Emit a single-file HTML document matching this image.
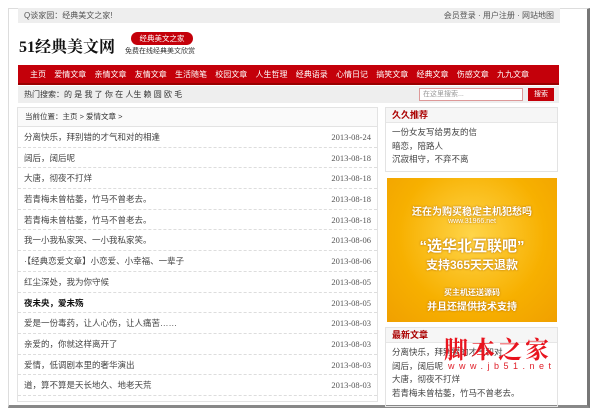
<!DOCTYPE html><html><head><meta charset="utf-8"><style>
*{margin:0;padding:0;box-sizing:border-box}
body{width:600px;height:413px;background:#fff;font-family:"Liberation Sans","Noto Sans CJK SC",sans-serif;font-size:9px;color:#333;position:relative;overflow:hidden}
.frame{position:absolute;left:8px;top:8px;width:582px;height:400px;border:1px solid #ddd;border-right:3px solid #777;border-bottom:3px solid #888;background:#fff}
.a{position:absolute}
.top{left:18px;top:8px;width:542px;height:15px;background:#eee;color:#555;font-size:8px;line-height:15px;padding:0 6px}
.nav{left:18px;top:65px;width:541px;height:20px;background:#c4000a;border-bottom:2px solid #900;color:#fff;font-size:8px;line-height:20px;display:flex;justify-content:space-between;padding:0 30px 0 12px}
.srch{left:18px;top:86px;width:541px;height:17px;background:#eee;font-size:8px;line-height:17px;padding-left:6px}
.box{border:1px solid #e3e3e3}
.row{height:20.7px;line-height:20.7px;border-bottom:1px dashed #ddd;padding:0 6px;font-size:8.5px;color:#444;display:flex;justify-content:space-between}
.row b{color:#111}
.row i{font-style:normal;font-family:"Liberation Serif",serif;color:#555}
.side p{font-size:8.5px;line-height:13.5px;padding-left:6px;color:#444}
.st{height:15px;line-height:15px;background:#f6f6f6;border-bottom:1px solid #e6e6e6;color:#a00;font-weight:bold;font-size:9px;padding-left:6px;margin-bottom:3px}
</style></head><body>
<div class="frame"></div>
<div class="a top">Q谈家园：经典美文之家!<span style="float:right">会员登录 · 用户注册 · 网站地图</span></div>
<div class="a" style="left:19px;top:34px;font-family:'Liberation Serif','Noto Serif CJK SC',serif;font-weight:bold;font-size:16px;color:#111">51经典美文网</div>
<div class="a" style="left:131px;top:32px;width:62px;height:13px;border-radius:7px;background:#c4000a;color:#fff;font-size:7.5px;line-height:13px;text-align:center">经典美文之家</div>
<div class="a" style="left:125px;top:46px;font-size:7px;color:#333">免费在线经典美文欣赏</div>
<div class="a nav"><span>主页</span><span>爱情文章</span><span>亲情文章</span><span>友情文章</span><span>生活随笔</span><span>校园文章</span><span>人生哲理</span><span>经典语录</span><span>心情日记</span><span>搞笑文章</span><span>经典文章</span><span>伤感文章</span><span>九九文章</span></div>
<div class="a srch">热门搜索：的 是 我 了 你 在 人生 赖 圆 欧 毛</div>
<div class="a" style="left:419px;top:88px;width:104px;height:13px;border:1px solid #d99;background:#fff;font-size:7px;color:#999;line-height:11px;padding-left:3px">在这里搜索...</div>
<div class="a" style="left:528px;top:88px;width:26px;height:13px;background:#c4000a;color:#fff;font-size:7px;line-height:13px;text-align:center">搜索</div>
<div class="a box" style="left:17px;top:107px;width:361px;height:295px">
<div style="height:19px;line-height:17px;border-bottom:1px solid #e3e3e3;font-size:7.5px;padding-left:7px;background:#fafafa">当前位置：主页 > 爱情文章 ></div>
<div class="row"><span>分离快乐，拜别错的才气和对的相逢</span><i>2013-08-24</i></div>
<div class="row"><span>阔后，阔后呢</span><i>2013-08-18</i></div>
<div class="row"><span>大唐，彻夜不打烊</span><i>2013-08-18</i></div>
<div class="row"><span>若青梅未曾枯萎，竹马不曾老去。</span><i>2013-08-18</i></div>
<div class="row"><span>若青梅未曾枯萎，竹马不曾老去。</span><i>2013-08-18</i></div>
<div class="row"><span>我一小我私家哭、一小我私家笑。</span><i>2013-08-06</i></div>
<div class="row"><span>·【经典恋爱文章】小恋爱、小幸福、一辈子</span><i>2013-08-06</i></div>
<div class="row"><span>红尘深处，我为你守候</span><i>2013-08-05</i></div>
<div class="row"><b>夜未央，爱未殇</b><i>2013-08-05</i></div>
<div class="row"><span>爱是一份毒药，让人心伤，让人痛苦……</span><i>2013-08-03</i></div>
<div class="row"><span>亲爱的，你就这样离开了</span><i>2013-08-03</i></div>
<div class="row"><span>爱情，低调剧本里的奢华演出</span><i>2013-08-03</i></div>
<div class="row"><span>道，算不算是天长地久、地老天荒</span><i>2013-08-03</i></div>
</div>
<div class="a box side" style="left:385px;top:107px;width:173px;height:65px"><div class="st">久久推荐</div><p>一份女友写给男友的信</p><p>暗恋，陪路人</p><p>沉寂相守，不弃不离</p></div>
<div class="a" style="left:387px;top:178px;width:170px;height:144px;background:radial-gradient(circle at 50% 40%,#ffd54a,#f7b000 60%,#f0a000);color:#fff;text-align:center;font-weight:bold;text-shadow:0 0 2px #a60">
<div style="margin-top:25px;font-size:10px">还在为购买稳定主机犯愁吗</div>
<div style="font-size:7px;font-weight:normal">www.31966.net</div>
<div style="margin-top:10px;font-size:15px">“选华北互联吧”</div>
<div style="font-size:12px">支持365天天退款</div>
<div style="margin-top:14px;font-size:8px">买主机还送源码</div>
<div style="font-size:10px">并且还提供技术支持</div></div>
<div class="a box side" style="left:385px;top:327px;width:173px;height:80px"><div class="st">最新文章</div><p>分离快乐，拜别错的才气和对</p><p>阔后，阔后呢</p><p>大唐，彻夜不打烊</p><p>若青梅未曾枯萎，竹马不曾老去。</p></div>
<div class="a" style="left:444px;top:330px;font-size:24px;font-weight:bold;color:#e8141e;font-family:'Noto Serif CJK SC',serif;letter-spacing:3px">脚本之家</div>
<div class="a" style="left:448px;top:361px;font-size:9px;color:#e0202a;letter-spacing:4.5px">www.jb51.net</div>
</body></html>
